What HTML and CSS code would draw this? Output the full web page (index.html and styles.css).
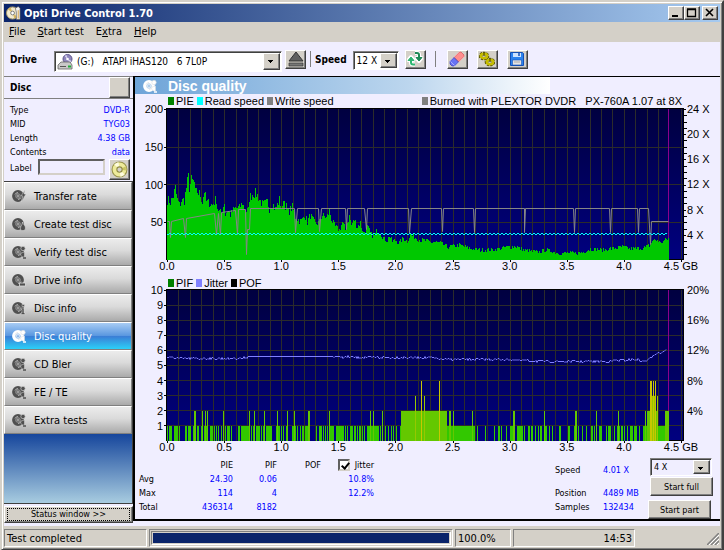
FILE: index.html
```html
<!DOCTYPE html>
<html lang="en">
<head>
    <meta charset="UTF-8">
    <meta name="viewport" content="width=device-width, initial-scale=1.0">
    <title>Opti Drive Control 1.70</title>
    <link rel="stylesheet" href="styles.css">
</head>
<body>
    <svg class="symbols" aria-hidden="true">
        <symbol id="disc" viewBox="0 0 14 14">
            <circle cx="6" cy="7" r="4.2" fill="none" stroke="currentColor" stroke-width="3.4"/>
            <circle cx="6" cy="7" r="1.900" fill="none" stroke="currentColor" stroke-width="0.9"/>
            <path d="M3 5.500a3.500 3.500 0 0 1 3-2M9 8.500a3.500 3.500 0 0 1-3 2" fill="none" stroke="#ddd" stroke-width="0.7"/>
            <circle cx="6" cy="7" r="0.8" fill="currentColor"/>
        </symbol>
        <symbol id="lens" viewBox="0 0 14 14">
            <use href="#disc"/>
            <circle cx="11" cy="3.500" r="2.2" fill="currentColor" stroke="#ddd" stroke-width="0.6"/>
            <path d="M9 8l3.500-1v5h-2l-2-2z" fill="currentColor" stroke="#ddd" stroke-width="0.5"/>
            <path d="M11 13h3" stroke="currentColor" stroke-width="1.500"/>
        </symbol>
    </svg>

    <div class="window">
        <header class="titlebar">
            <svg class="app-icon" viewBox="0 0 16 16">
                <circle cx="7" cy="8" r="6.5" fill="#f2ead0" stroke="#a89868"/>
                <path d="M7 8L2 4l3-2zM7 8l5 4-3 2z" fill="#d8b860"/>
                <circle cx="7" cy="8" r="2" fill="#fff" stroke="#777"/>
                <path d="M10 3l3-2 2 2v12h-4V7z" fill="#f4f4f4" stroke="#555" stroke-width="0.7"/>
                <path d="M13 5v9" stroke="#d39b35"/>
            </svg>
            <h1>Opti Drive Control 1.70</h1>
            <div class="window-buttons">
                <button class="raised" aria-label="Minimize"><svg viewBox="0 0 12 10"><path d="M2 8h6" stroke="#000" stroke-width="2"/></svg></button>
                <button class="raised" aria-label="Maximize"><svg viewBox="0 0 12 10"><path d="M1.5 1.5h8v7h-8zM1 1h9" fill="none" stroke="#000" stroke-width="1.3"/></svg></button>
                <button class="raised close" aria-label="Close"><svg viewBox="0 0 12 10"><path d="M2 1l7 7M9 1L2 8" stroke="#000" stroke-width="1.6"/></svg></button>
            </div>
        </header>

        <nav class="menu">
            <a href="#"><u>F</u>ile</a>
            <a href="#"><u>S</u>tart test</a>
            <a href="#">E<u>x</u>tra</a>
            <a href="#"><u>H</u>elp</a>
        </nav>

        <div class="toolbar">
            <label for="drive">Drive</label>
            <span class="combo drive">
                <svg class="drive-icon" viewBox="0 0 16 16">
                    <circle cx="10.500" cy="5" r="4.5" fill="#8f86bd" stroke="#5b5488"/>
                    <path d="M10.500 5l-3-3 2-1zM10.500 5l4 2-2 2z" fill="#d8d4f0"/>
                    <circle cx="10.500" cy="5" r="1.3" fill="#fff"/>
                    <path d="M1 11l3-3h9l2 3v4H1z" fill="#c9c9c9" stroke="#666" stroke-width="0.8"/>
                    <path d="M3 12.500h6" stroke="#555"/>
                    <path d="M11 12.500h3" stroke="#1fae3a" stroke-width="2"/>
                </svg>
                <select id="drive"><option>(G:) &nbsp; ATAPI iHAS120 &nbsp; 6 7L0P</option></select>
            </span>
            <button class="raised tool" aria-label="Eject"><svg viewBox="0 0 16 16"><path d="M8 1l7 9H1z" fill="#606060" stroke="#333"/><path d="M1 12h14v3H1z" fill="#777" stroke="#333" stroke-width="0.7"/></svg></button>
            <span class="separator"></span>
            <label for="speed">Speed</label>
            <span class="combo speed"><select id="speed"><option>12 X</option></select></span>
            <button class="raised tool refresh" aria-label="Refresh">
                <svg viewBox="0 0 16 16">
                    <g fill="none" stroke="#fff" stroke-width="4" stroke-linejoin="round"><path d="M8 13.500H6q-2 0-2-2V8M1.500 9L4 6l2.500 3z"/><path d="M8 2h2q2 0 2 2v3M9.500 7L12 10l2.500-3z"/></g>
                    <g fill="#2fb672" stroke="#2fb672"><path d="M1 9.500L4 6l3 3.500z"/><path d="M8 13.500H6q-2 0-2-2V8" fill="none" stroke-width="2"/></g>
                    <g fill="#1f8a55" stroke="#1f8a55"><path d="M9 6.500L12 10l3-3.500z"/><path d="M8 2h2q2 0 2 2v3" fill="none" stroke-width="2"/></g>
                </svg>
            </button>
            <span class="separator wide"></span>
            <button class="raised tool" aria-label="Erase disc">
                <svg viewBox="0 0 16 16">
                    <path d="M1 10L10 1h2l3 3v2l-9 9H3l-2-2z" fill="#fff" stroke="#fff"/>
                    <path d="M5 6.500L10.500 1h1.500l3 3v1.500L9.500 11z" fill="#ff8d8d" stroke="#d05858" stroke-width="0.8"/>
                    <path d="M5 6.500L9.500 11l-4 4H3l-2-2v-2.500z" fill="#6873f5" stroke="#3d3dae" stroke-width="0.8"/>
                    <path d="M1.500 10.500l4 4" stroke="#a9aeff"/>
                </svg>
            </button>
            <button class="raised tool" aria-label="Settings">
                <svg viewBox="0 0 16 16">
                    <g fill="none" stroke="#4e4a00" stroke-width="3.400" stroke-dasharray="2 0.700"><ellipse cx="5" cy="5" rx="3.600" ry="2.600"/><ellipse cx="11" cy="11" rx="3.600" ry="2.600"/></g>
                    <g fill="none" stroke="#c6bd00" stroke-width="2.500"><ellipse cx="5" cy="5" rx="3.200" ry="2.200"/><ellipse cx="11" cy="11" rx="3.200" ry="2.200"/></g>
                    <path d="M5 1v4M11 7v4" stroke="#4e4a00" stroke-width="1.200"/>
                </svg>
            </button>
            <button class="raised tool" aria-label="Save"><svg viewBox="0 0 16 16"><path d="M1.500 1.500h12l1 1v12h-13z" fill="#2c83ee" stroke="#1551b5"/><path d="M4 2h8v4H4z" fill="#cde4ff"/><path d="M10 2v3" stroke="#1551b5" stroke-width="1.500"/><path d="M3.500 9h9v5h-9z" fill="#e4e4e4" stroke="#1551b5" stroke-width="0.6"/><path d="M5 11h6" stroke="#aaa"/></svg></button>
        </div>

        <div class="main">
            <aside class="side">
                <div class="disc-head"><h2>Disc</h2><button class="raised" aria-label="Disc details"></button></div>
                <dl class="disc-data">
                    <dt>Type</dt><dd>DVD-R</dd>
                    <dt>MID</dt><dd>TYG03</dd>
                    <dt>Length</dt><dd>4.38 GB</dd>
                    <dt>Contents</dt><dd>data</dd>
                </dl>
                <div class="disc-label">
                    <label for="label">Label</label>
                    <input type="text" id="label">
                    <button class="raised" aria-label="Read label"><svg viewBox="0 0 16 16"><circle cx="8" cy="8" r="7" fill="#eeeb9a" stroke="#98944a"/><path d="M8 8L3 3l4-2zM8 8l5 5-4 2z" fill="#fffde0"/><path d="M8 8l6-3v4z" fill="#c9c460"/><circle cx="8" cy="8" r="2.500" fill="#d4d0c8" stroke="#8f8b45"/></svg></button>
                </div>
                <div class="tests">
                    <button><svg viewBox="0 0 14 14"><use href="#disc"/><path d="M13 1L9 7h2l-2 6 5-8h-2z" fill="currentColor" stroke="#ddd" stroke-width="0.5"/></svg>Transfer rate</button>
                    <button><svg viewBox="0 0 14 14"><use href="#disc"/><path d="M10.500 5c0 2 3 3 3 6 0 4-6 3-5 0 0-2 2-3 2-6z" fill="currentColor" stroke="#ddd" stroke-width="0.6"/></svg>Create test disc</button>
                    <button><svg viewBox="0 0 14 14"><use href="#lens"/></svg>Verify test disc</button>
                    <button><svg viewBox="0 0 14 14"><use href="#disc"/><path d="M7.500 10h6v3h-6z" fill="currentColor" stroke="#ddd" stroke-width="0.8"/></svg>Drive info</button>
                    <button><svg viewBox="0 0 14 14"><use href="#disc"/><path d="M9 7h3v5h1v1.500H9V12h1V8.500H9zM10 3.500h2.500v2H10z" fill="currentColor" stroke="#ddd" stroke-width="0.5"/></svg>Disc info</button>
                    <button class="active"><svg viewBox="0 0 14 14"><use href="#lens"/></svg>Disc quality</button>
                    <button><svg viewBox="0 0 14 14"><use href="#lens"/></svg>CD Bler</button>
                    <button><svg viewBox="0 0 14 14"><use href="#lens"/></svg>FE / TE</button>
                    <button><svg viewBox="0 0 14 14"><use href="#lens"/></svg>Extra tests</button>
                </div>
                <button class="raised status-window"><span>Status window &gt;&gt;</span></button>
            </aside>

            <main class="content">
                <h2 class="page-title"><svg viewBox="0 0 14 14"><use href="#lens"/></svg>Disc quality</h2>

                <div class="legend">
                    <span class="pie">PIE</span><span class="read">Read speed</span><span class="write">Write speed</span>
                    <span class="write burned">Burned with PLEXTOR DVDR &nbsp; PX-760A 1.07 at 8X</span>
                </div>
                <div class="chart">
                    <ul class="axis left"><li>200</li><li>150</li><li>100</li><li>50</li><li></li></ul>
                    <svg class="plot" id="pieChart" viewBox="0 0 517 151" preserveAspectRatio="none"></svg>
                    <ul class="axis right"><li>24 X</li><li>20 X</li><li>16 X</li><li>12 X</li><li>8 X</li><li>4 X</li><li></li></ul>
                    <ul class="axis bottom"><li>0.0</li><li>0.5</li><li>1.0</li><li>1.5</li><li>2.0</li><li>2.5</li><li>3.0</li><li>3.5</li><li>4.0</li><li>4.5 GB</li></ul>
                </div>

                <div class="legend second">
                    <span class="pie">PIF</span><span class="jitter">Jitter</span><span class="pof">POF</span>
                </div>
                <div class="chart">
                    <ul class="axis left"><li>10</li><li>9</li><li>8</li><li>7</li><li>6</li><li>5</li><li>4</li><li>3</li><li>2</li><li>1</li><li></li></ul>
                    <svg class="plot" id="pifChart" viewBox="0 0 517 151" preserveAspectRatio="none"></svg>
                    <ul class="axis right"><li>20%</li><li>16%</li><li>12%</li><li>8%</li><li>4%</li><li></li></ul>
                    <ul class="axis bottom"><li>0.0</li><li>0.5</li><li>1.0</li><li>1.5</li><li>2.0</li><li>2.5</li><li>3.0</li><li>3.5</li><li>4.0</li><li>4.5 GB</li></ul>
                </div>

                <div class="results">
                    <table>
                        <thead>
                            <tr><td></td><th>PIE</th><th>PIF</th><th>POF</th><th><label><input type="checkbox" checked>Jitter</label></th></tr>
                        </thead>
                        <tbody>
                            <tr><th>Avg</th><td>24.30</td><td>0.06</td><td></td><td>10.8%</td></tr>
                            <tr><th>Max</th><td>114</td><td>4</td><td></td><td>12.2%</td></tr>
                            <tr><th>Total</th><td>436314</td><td>8182</td><td></td><td></td></tr>
                        </tbody>
                    </table>
                    <dl class="progress-data">
                        <dt><label for="testSpeed">Speed</label></dt><dd>4.01 X</dd>
                        <dt>Position</dt><dd>4489 MB</dd>
                        <dt>Samples</dt><dd>132434</dd>
                    </dl>
                    <div class="controls">
                        <span class="combo"><select id="testSpeed"><option>4 X</option></select></span>
                        <button class="raised">Start full</button>
                        <button class="raised part">Start part</button>
                    </div>
                </div>
            </main>
        </div>

        <footer class="statusbar">
            <span class="cell message">Test completed</span>
            <span class="cell bar"><progress value="100" max="100" aria-label="Test progress"></progress></span>
            <span class="cell percent">100.0%</span>
            <span class="cell time">14:53</span>
            <svg class="grip" viewBox="0 0 12 12"><path d="M0 12L12 0M4 12l8-8M8 12l4-4" stroke="#808080" stroke-width="1.500"/><path d="M2 12L12 2M6 12l6-6M10 12l2-2" stroke="#fff"/></svg>
        </footer>
    </div>

    <script src="script.js"></script>
</body>
</html>
```

FILE: styles.css
```css
* {
    box-sizing: border-box;
}

body {
    margin: 0;
    font-family: "DejaVu Sans Condensed", "DejaVu Sans", sans-serif;
    font-size: 11px;
    color: #000;
    background: #d4d0c8;
}

h1, h2, ul, dl, dd {
    margin: 0;
    padding: 0;
}

ul {
    list-style: none;
}

button, select, input {
    font: inherit;
    color: inherit;
    margin: 0;
}

svg {
    display: block;
}

.symbols {
    position: absolute;
    width: 0;
    height: 0;
}

/* window frame */
.window {
    display: flex;
    flex-direction: column;
    min-height: 100vh;
    padding: 2px;
    border: 2px solid;
    border-color: #d4d0c8 #404040 #404040 #d4d0c8;
    box-shadow: inset 1px 1px #fff, inset -1px -1px #808080;
    background: #d4d0c8;
}

.raised {
    padding: 0;
    background: #d4d0c8;
    border: 1px solid;
    border-color: #fff #404040 #404040 #fff;
    box-shadow: inset -1px -1px #808080;
}

.titlebar {
    display: flex;
    align-items: center;
    height: 18px;
    padding: 0 2px;
    color: #fff;
    background: linear-gradient(to right, #0a246a, #a6caf0);
}

.app-icon {
    width: 15px;
    height: 16px;
    margin-right: 3px;
}

.titlebar h1 {
    flex: 1;
    font-size: 11px;
}

.window-buttons {
    display: flex;
}

.window-buttons button {
    width: 16px;
    height: 14px;
}

.window-buttons svg {
    width: 12px;
    height: 10px;
    margin: 0 1px;
}

.window-buttons .close {
    margin-left: 2px;
}

.menu {
    display: flex;
    gap: 12px;
    height: 20px;
    padding-left: 5px;
    line-height: 20px;
}

.menu a {
    color: #000;
    text-decoration: none;
}

/* toolbar */
.toolbar {
    display: flex;
    align-items: center;
    height: 34px;
    padding-left: 6px;
    background: #f0eeff;
}

.toolbar label {
    font-size: 10px;
    font-weight: bold;
}

.toolbar label[for="drive"] {
    width: 44px;
}

.combo {
    position: relative;
    display: block;
    height: 19px;
    background: #fff;
    border: 1px solid;
    border-color: #808080 #fff #fff #808080;
    box-shadow: inset 1px 1px #404040;
}

.combo select {
    appearance: none;
    width: 100%;
    height: 100%;
    padding: 0 18px 0 4px;
    border: 0;
    border-radius: 0;
    background: transparent;
    font-size: 10px;
}

/* arrow button, the triangle is three stacked lines */
.combo::after {
    content: "";
    position: absolute;
    top: 1px;
    right: 1px;
    bottom: 1px;
    width: 15px;
    border: 1px solid;
    border-color: #fff #404040 #404040 #fff;
    box-shadow: inset -1px -1px #808080;
    background-color: #d4d0c8;
    background-image: linear-gradient(#000, #000), linear-gradient(#000, #000), linear-gradient(#000, #000);
    background-size: 5px 1px, 3px 1px, 1px 1px;
    background-position: 4px 6px, 5px 7px, 6px 8px;
    background-repeat: no-repeat;
    pointer-events: none;
}

.combo.drive {
    width: 228px;
    height: 21px;
    margin: 5px 3px 0 0;
}

.drive select {
    padding-left: 22px;
}

.drive-icon {
    position: absolute;
    left: 2px;
    top: 2px;
    width: 16px;
    height: 16px;
}

.combo.speed {
    width: 46px;
    margin: 3px 6px 0 6px;
}

.speed select {
    padding-left: 3px;
}

.tool {
    width: 21px;
    height: 19px;
    margin-right: 9px;
}

.tool svg {
    width: 16px;
    height: 16px;
    margin: auto;
}

.separator {
    width: 1px;
    height: 16px;
    margin: 0 4px 0 -5px;
    background: #808080;
}

.separator.wide {
    margin: 0 11px 0 0;
}

/* left column */
.main {
    flex: 1;
    display: grid;
    grid-template-columns: 129px 1fr;
    background: #f0eeff;
    padding-bottom: 3px;
}

.side {
    display: flex;
    flex-direction: column;
}

.disc-head {
    display: flex;
    justify-content: space-between;
    align-items: center;
    height: 23px;
    padding: 0 3px 0 6px;
    border-top: 1px solid #808080;
    border-bottom: 1px solid #808080;
}

.disc-head h2 {
    font-size: 10px;
}

.disc-head button {
    width: 21px;
    height: 21px;
}

.disc-data {
    display: grid;
    grid-template-columns: auto 1fr;
    padding: 4px 3px 0 6px;
    font-size: 9px;
    line-height: 14px;
}

.disc-data dd {
    text-align: right;
    color: #00f;
}

.disc-label {
    display: flex;
    align-items: flex-start;
    height: 22px;
    padding: 0 3px 0 6px;
    font-size: 9px;
    line-height: 18px;
}

.disc-label input {
    flex: 1;
    min-width: 0;
    height: 16px;
    margin: 0 4px 0 6px;
    border: 2px solid;
    border-color: #606060 #d4d0c8 #d4d0c8 #606060;
    background: #f0eeff;
}

.disc-label button {
    width: 21px;
    height: 21px;
}

.disc-label svg {
    width: 17px;
    height: 17px;
    margin: auto;
}

.tests {
    flex: 1;
    border-top: 1px solid #404040;
    border-bottom: 1px solid #404040;
    border-right: 1px solid #404040;
    background: linear-gradient(#16469c 252px, #a8cce0);
}

.tests button {
    display: flex;
    align-items: center;
    width: 100%;
    height: 28px;
    padding: 0 0 0 7px;
    border: 1px solid;
    border-color: #fff #808080 #808080 #fff;
    background: linear-gradient(#ececec, #dadada 45%, #aaa);
    text-align: left;
}

.tests svg {
    width: 14px;
    height: 14px;
    margin-right: 8px;
    color: #505050;
}

.tests .active {
    color: #fff;
    background: linear-gradient(#a8ccf4, #5b98e0 48%, #3a7fd6 52%, #2bd0f8);
}

.tests .active svg {
    color: #fff;
}

.status-window {
    height: 17px;
    margin-top: 2px;
    padding: 1px 2px;
    font-size: 9px;
}

.status-window span {
    display: block;
    line-height: 11px;
    border: 1px dotted #000;
}

/* right pane */
.content {
    display: flex;
    flex-direction: column;
    margin-bottom: 2px;
    border: solid #000;
    border-width: 1px 0 2px 2px;
}

.page-title {
    display: flex;
    align-items: center;
    width: 71%;
    height: 17px;
    padding-left: 8px;
    font: bold 14px "Liberation Sans", Arial, sans-serif;
    color: #fff;
    background: linear-gradient(to right, #6ea4d8, #bcd6ee 66%, #fff);
}

.page-title svg {
    width: 14px;
    height: 14px;
    margin-right: 11px;
}

.legend {
    display: flex;
    gap: 3px;
    height: 15px;
    padding: 0 38px 0 33px;
    font: 11px/15px "Liberation Sans", Arial, sans-serif;
}

.legend.second {
    height: 14px;
}

.legend span::before {
    content: "";
    display: inline-block;
    width: 6px;
    height: 8px;
    margin-right: 2px;
    background: currentColor;
}

.legend .pie::before {
    background: #008000;
}

.legend .read::before {
    background: #0ff;
}

.legend .write::before {
    background: #808080;
}

.legend .jitter::before {
    background: #8080ff;
}

.legend .burned {
    margin-left: auto;
}

.chart {
    display: grid;
    grid-template-columns: 32px 1fr 36px;
    grid-template-rows: 151px 16px;
    font: 11px "Liberation Sans", Arial, sans-serif;
}

.plot {
    width: 100%;
    height: 151px;
    overflow: visible;
}

/* zero-sized items put each label's centre on its tick */
.axis {
    display: flex;
    justify-content: space-between;
    white-space: nowrap;
}

.axis.left, .axis.right {
    flex-direction: column;
}

.axis li {
    height: 0;
    line-height: 1px;
}

.axis.left {
    padding-right: 4px;
    text-align: right;
}

.axis.right {
    padding-left: 3px;
}

.axis.bottom {
    grid-column: 2;
    padding-right: 3px;
}

.axis.bottom li {
    display: flex;
    justify-content: center;
    width: 0;
    line-height: 12px;
}

/* results */
.results {
    display: flex;
    align-items: flex-start;
    padding: 1px 6px 0 4px;
    font-size: 9px;
}

.results table {
    border-collapse: collapse;
    line-height: 14px;
    text-align: right;
}

.results th, .results td {
    width: 44px;
    height: 14px;
    padding: 0;
}

.results th {
    font-weight: normal;
}

.results thead td {
    width: 40px;
}

.results thead th:nth-child(2) {
    width: 50px;
}

.results thead th:nth-child(5) {
    width: 53px;
}

.results tbody th {
    text-align: left;
}

.results tbody td {
    color: #00f;
}

.results thead label {
    display: flex;
    align-items: center;
    justify-content: flex-end;
    gap: 5px;
}

.results input {
    appearance: none;
    width: 12px;
    height: 12px;
    border: 2px solid;
    border-color: #606060 #d4d0c8 #d4d0c8 #606060;
    background: #fff;
}

.results input:checked::before {
    content: "";
    display: block;
    width: 3px;
    height: 6px;
    margin: 0 0 0 3px;
    border: solid #000;
    border-width: 0 2px 2px 0;
    transform: rotate(40deg);
}

.progress-data {
    display: grid;
    grid-template-columns: 48px 47px;
    margin: 5px 0 0 auto;
    line-height: 14px;
}

.progress-data dt:first-child, .progress-data dd:nth-child(2) {
    margin-bottom: 9px;
}

.progress-data dd {
    color: #00f;
}

.controls {
    display: flex;
    flex-direction: column;
    width: 64px;
}

.controls .combo {
    width: 62px;
    height: 18px;
    background: #f0eeff;
}

.controls .combo select {
    padding-left: 3px;
    font-size: 9px;
}

.controls button {
    width: 63px;
    height: 19px;
    margin-top: 1px;
}

.controls .part {
    margin: 4px 0 0 -2px;
}

/* status bar */
.statusbar {
    display: flex;
    gap: 2px;
    height: 18px;
    margin-top: 3px;
}

.cell {
    border: 1px solid;
    border-color: #808080 #fff #fff #808080;
    line-height: 17px;
    padding: 0 2px;
}

.message {
    width: 20%;
}

.bar {
    flex: 1;
    padding: 1px;
}

.bar progress {
    appearance: none;
    display: block;
    width: 100%;
    height: 14px;
    padding: 1px;
    border: 1px solid;
    border-color: #808080 #fff #fff #808080;
    background: #d4d0c8;
}

.bar progress::-webkit-progress-bar {
    background: #d4d0c8;
}

.bar progress::-webkit-progress-value {
    background: #0a246a;
}

.percent {
    width: 56px;
}

.time {
    width: 122px;
    text-align: right;
}

.grip {
    width: 12px;
    height: 12px;
    margin: 4px 1px 0 70px;
}
```

FILE: script.js
```js
const NS = "http://www.w3.org/2000/svg";
const W = 517, H = 151;
const GB = 114.2; // plot units per gigabyte

function add(svg, d, stroke, extra) {
    const p = document.createElementNS(NS, "path");
    p.setAttribute("d", d);
    p.setAttribute("stroke", stroke);
    p.setAttribute("fill", "none");
    for (const k in extra) p.setAttribute(k, extra[k]);
    svg.appendChild(p);
}

function background(svg, rows, id) {
    svg.innerHTML = '<defs><linearGradient id="' + id + '" x2="0" y2="1">' +
        '<stop stop-color="#000040"/><stop offset="1" stop-color="#000080"/></linearGradient></defs>' +
        '<rect width="' + W + '" height="' + H + '" fill="url(#' + id + ')"/>';
    let d = "";
    for (let i = 1; i <= 45; i++) {
        if (i !== 44) d += "M" + (Math.round(i * GB / 10) + 0.5) + " 0V" + H;
    }
    for (let i = 1; i < rows; i++) d += "M0 " + (Math.round(i * 150.5 / rows) + 0.5) + "H" + W;
    add(svg, d, "#2b2b2b", { "shape-rendering": "crispEdges" });
    // end of the recorded area
    add(svg, "M501 0h1V" + H + "h-1z", "none", { fill: "#8c008c", "shape-rendering": "crispEdges" });
}

function frame(svg, rows) {
    let d = "M-.5 " + H + "V-.5H516.500V" + H + "M-1 150.500H0M502 150.500H517";
    for (let i = 0; i < rows; i++) d += "M-3 " + (Math.round(i * 150.5 / rows) + 0.5) + "h3";
    for (let i = 0; i <= 9; i++) d += "M" + (Math.round(i * GB / 2) + 0.5) + " 151v2";
    add(svg, d, "#000", { "shape-rendering": "crispEdges" });
}

// straight-line value between [x, y] points
function at(points, x) {
    let i = 1;
    while (i < points.length - 1 && points[i][0] < x) i++;
    const a = points[i - 1], b = points[i];
    return a[1] + (b[1] - a[1]) * (x - a[0]) / (b[0] - a[0]);
}

let seed = 7;
function noise() {
    seed = (seed * 16807) % 2147483647;
    return seed / 2147483647 - 0.5;
}

const pie = [[0,60],[3,58],[6,64],[8,72],[10,60],[12,55],[14,59],[17,60],[19,72],[21,83],[22,72],[24,80],[27,77],
    [28,67],[30,68],[33,65],[35,58],[37,69],[39,58],[42,57],[45,55],[49,61],[50,52],[54,46],[57,58],[58,45],
    [60,50],[63,45],[66,50],[69,52],[72,52],[75,57],[78,48],[81,50],[82,62],[85,66],[88,67],[90,65],[92,60],
    [96,55],[100,58],[102,52],[105,57],[108,51],[112,60],[115,50],[116,63],[118,55],[121,48],[125,53],[128,43],
    [132,39],[135,40],[137,46],[140,38],[143,45],[148,36],[152,38],[155,45],[159,42],[162,49],[165,38],[168,33],
    [172,30],[175,38],[178,30],[182,44],[184,35],[187,40],[190,33],[193,37],[196,27],[200,33],[204,25],[207,24],
    [210,30],[213,27],[217,21],[220,20],[222,25],[225,18],[228,20],[232,17],[236,22],[240,19],[243,25],[253,20],
    [263,18],[273,17],[280,13],[293,15],[300,12],[313,10],[326,10],[335,12],[348,14],[356,10],[370,8],[380,10],
    [390,7],[413,7],[423,11],[436,10],[446,12],[456,13],[463,11],[476,12],[483,15],[485,20],[490,20],[493,17],
    [500,21],[502,21]];

const write = [[0,112],[2,112],[3,128],[4,112],[16,109],[18,128],[19,109],[47,104],[49,125],[51,104],[53,125],
    [54,103],[68,101],[70,125],[71,100],[78,100],[79,145],[80,120],[82,120],[83,99],[127,99],[128,123],[130,99],
    [151,99],[152,122],[154,99],[178,99],[179,120],[180,99],[197,99],[199,120],[200,99],[241,99],[242,124],
    [244,99],[274,99],[275,122],[276,99],[306,99],[307,123],[308,99],[357,99],[357,123],[358,99],[406,99],
    [407,123],[408,99],[442,99],[443,123],[444,99],[470,99],[471,123],[472,99],[481,99],[483,135],[484,112],[501,112]];

const pieSvg = document.getElementById("pieChart");
background(pieSvg, 4, "pieBack");
let bars = "M0 151";
for (let x = 0; x < 502; x++) {
    const v = at(pie, x);
    bars += "V" + (H - Math.max(5, Math.round(v + noise() * (3 + v * 0.12)))) + "h1";
}
add(pieSvg, bars + "V151z", "none", { fill: "#00c800" });
add(pieSvg, "M" + write.map(p => (p[0] + 0.5) + " " + (p[1] + 0.5)).join("L"), "#868686");
let read = "";
for (let x = 0; x < 500; x += 2) read += "M" + x + " " + (x % 4 ? 124.5 : 125.5) + "h2";
add(pieSvg, read, "#0ff", { "shape-rendering": "crispEdges" });
frame(pieSvg, 4);
let ticks = "";
for (let i = 0; i < 24; i++) ticks += "M517 " + (Math.round(i * H / 24) + 0.5) + "h" + (i % 4 ? 3 : 2);
add(pieSvg, ticks, "#000");

// spans of columns for every PIF count; a single number is one column
const pif = {
    1: [0,[2,5],[7,11],12,[18,20],[21,24],26,[30,32],[34,36],[37,41],[43,46],47,49,51,54,58,[60,63],64,[71,73],
        [74,83],84,[86,88],[89,93],94,[96,98],[99,105],[109,113],114,116,[119,121],[125,129],130,133,[135,137],
        [138,143],149,[152,155],156,158,160,[162,167],[169,177],178,180,[183,186],[187,189],190,[192,194],195,
        197,[200,212],213,215,218,221,224,226,229,233,[280,308],310,318,327,[331,333],334,339,[343,347],
        [350,356],357,[361,363],[364,366],368,371,[373,375],[377,380],382,385,[392,394],[401,403],[407,410],411,
        415,419,[424,426],427,429,[432,435],439,[441,444],447,[450,453],[454,456],457,460,[463,466],[467,470],
        472,[476,502]],
    2: [[27,29],35,38,40,56,82,87,97,110,120,127,[141,143],162,203,206,215,[234,280],[282,284],286,305,
        [346,348],377,[408,410],429,451,478,[480,491],[498,502]],
    3: [248,257,[483,489],490],
    4: [254,272,[483,485],486,488]
};
const pifColors = { 1: "#32c800", 2: "#64c800", 3: "#96c800", 4: "#c8c800" };

const pifSvg = document.getElementById("pifChart");
background(pifSvg, 10, "pifBack");
for (const n in pif) {
    let d = "";
    for (const s of pif[n]) {
        const a = s.length ? s[0] : s, b = s.length ? s[1] : s + 1;
        d += "M" + a + " 151V" + (H - n * 15) + "H" + b + "V151z";
    }
    add(pifSvg, d, "none", { fill: pifColors[n], "shape-rendering": "crispEdges" });
}
const jitter = [[0,67],[15,68],[75,68],[82,66],[160,66],[200,67],[243,67],[263,67],[276,69],[343,69],[353,70],
    [380,71],[440,71],[450,70],[470,69],[476,71],[482,69],[486,65],[490,62],[494,62],[500,59]];
let line = "";
for (let x = 0; x < 500; x++) {
    const calm = x > 80 && x < 175 ? 0.8 : 2.4;
    line += (x ? "L" : "M") + x + " " + (Math.round(at(jitter, x) + noise() * calm) + 0.5);
}
add(pifSvg, line, "#8080ff");
frame(pifSvg, 10);
```
